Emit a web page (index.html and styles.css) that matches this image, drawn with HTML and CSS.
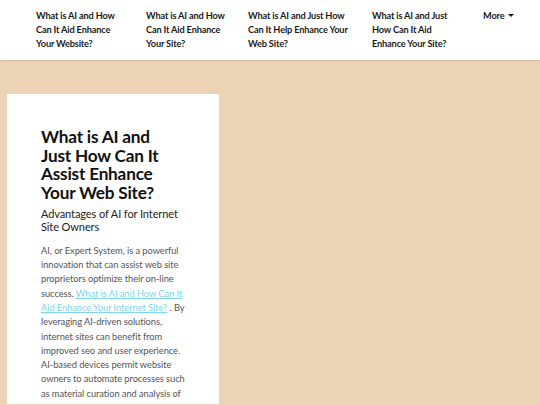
FILE: index.html
```html
<!DOCTYPE html>
<html>
<head>
<meta charset="utf-8">
<link rel="stylesheet" href="styles.css">
</head>
<body>
<header class="topbar">
  <nav class="nav">
    <a class="nav-item w1" href="#">What is AI and How<br>Can It Aid Enhance<br>Your Website?</a>
    <a class="nav-item w2" href="#">What is AI and How<br>Can It Aid Enhance<br>Your Site?</a>
    <a class="nav-item w3" href="#">What is AI and Just How<br>Can It Help Enhance Your<br>Web Site?</a>
    <a class="nav-item w4" href="#">What is AI and Just<br>How Can It Aid<br>Enhance Your Site?</a>
    <a class="nav-item more" href="#">More <span class="caret"></span></a>
  </nav>
</header>
<main class="hero">
  <article class="card">
    <h1 class="title">What is AI and Just How Can It Assist Enhance Your Web Site?</h1>
    <p class="subtitle">Advantages of AI for Internet Site Owners</p>
    <p class="body">AI, or Expert System, is a powerful innovation that can assist web site proprietors optimize their on-line success. <a class="link" href="#">What is AI and How Can It Aid Enhance Your Internet Site?</a> . By leveraging AI-driven solutions, internet sites can benefit from improved seo and user experience. AI-based devices permit website owners to automate processes such as material curation and analysis of visitor behavior, enabling them to make better decisions.</p>
  </article>
</main>
</body>
</html>
```
FILE: styles.css
```css
html, body {
  margin: 0;
  padding: 0;
}
body {
  font-family: "Lato", "Noto Sans", sans-serif;
  background: #ecd3b4;
  color: #111;
}
.topbar {
  background: #fff;
  height: 60px;
  box-shadow: 0 1px 2px rgba(0,0,0,0.12);
  position: relative;
  z-index: 1;
}
.nav {
  display: flex;
  padding: 9px 0 0 36px;
}
.nav-item {
  color: #1a1a1a;
  font-size: 9.2px;
  font-weight: 700;
  line-height: 14px;
  letter-spacing: -0.15px;
  text-decoration: none;
  white-space: nowrap;
}
.w1 { width: 110px; }
.w2 { width: 102px; }
.w3 { width: 124px; }
.w4 { width: 111px; }
.caret {
  display: inline-block;
  width: 0;
  height: 0;
  border-left: 3px solid transparent;
  border-right: 3px solid transparent;
  border-top: 3px solid #1a1a1a;
  vertical-align: 2px;
  margin-left: 1px;
}
.hero {
  padding: 34px 0 0 7px;
  height: 310px;
  overflow: hidden;
}
.card {
  background: #fff;
  width: 212px;
  box-sizing: border-box;
  padding: 34px 34px 20px 34px;
  min-height: 320px;
}
.title {
  margin: 0;
  max-width: 130px;
  font-size: 17.2px;
  line-height: 18.7px;
  font-weight: 700;
  letter-spacing: -0.2px;
  color: #111;
}
.subtitle {
  margin: 4px 0 0 0;
  font-size: 11px;
  line-height: 13px;
  letter-spacing: -0.1px;
  color: #222;
}
.body {
  margin: 11px 0 0 0;
  font-size: 9.3px;
  line-height: 14.3px;
  letter-spacing: -0.06px;
  color: #555;
}
.link {
  color: #7fd4ea;
}
```
